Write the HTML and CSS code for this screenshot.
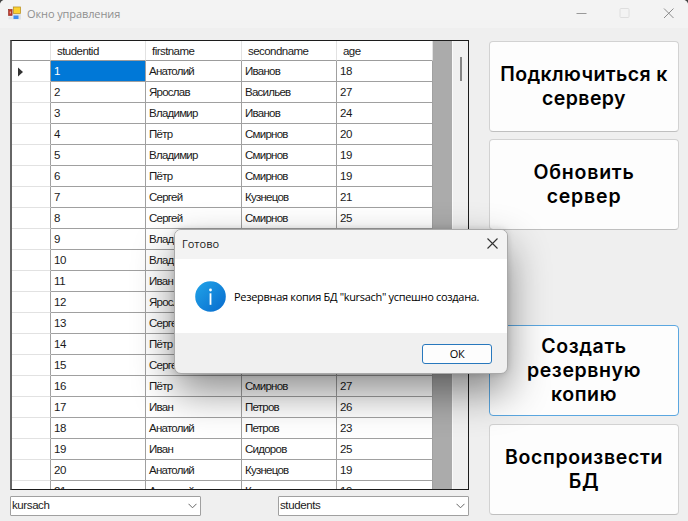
FILE: index.html
```
<!DOCTYPE html>
<html lang="ru">
<head>
<meta charset="utf-8">
<title>Окно управления</title>
<link rel="stylesheet" href="styles.css">
</head>
<body>
<div class="window">
  <header class="titlebar">
    <svg class="app-icon" width="14" height="14" viewBox="0 0 14 14">
      <rect x="4.500" y="0.500" width="8.500" height="13" fill="#dfe3e8"/>
      <rect x="0.500" y="3.500" width="3.600" height="6" fill="#c0392b" stroke="#8d2a20" stroke-width=".6"/>
      <rect x="1.800" y="5.500" width="1" height="2" fill="#f3c4bb"/>
      <rect x="5.500" y="1" width="7" height="6.500" fill="#fbd12f" stroke="#b98d1c" stroke-width=".7"/>
      <rect x="5.500" y="9.500" width="5" height="3.500" fill="#3f8df0"/>
      <rect x="0.500" y="10.800" width="4" height="2.500" fill="#dfe3e8"/>
    </svg>
    <h1 class="title">Окно управления</h1>
    <svg class="controls" width="100" height="12" viewBox="0 0 100 12" fill="none">
      <path d="M0.500 6.500H10.500" stroke="#999"/>
      <rect x="44" y="1.500" width="9" height="9" rx="1" stroke="#dedede"/>
      <path d="M88 1.500L97.500 11M97.500 1.500L88 11" stroke="#8c8c8c"/>
    </svg>
  </header>
  <main class="content">
    <section class="left">
      <div class="grid-box">
        <table class="grid">
          <colgroup><col class="c0"><col class="c1"><col class="c2"><col class="c1"><col class="c2"></colgroup>
          <thead><tr><th></th><th>studentid</th><th>firstname</th><th>secondname</th><th>age</th></tr></thead>
          <tbody>
            <tr><td><svg class="marker" width="5" height="10" viewBox="0 0 5 10"><path d="M0 0.500L5 5L0 9.500Z" fill="#333"/></svg></td><td class="selected">1</td><td>Анатолий</td><td>Иванов</td><td>18</td></tr>
            <tr><td></td><td>2</td><td>Ярослав</td><td>Васильев</td><td>27</td></tr>
            <tr><td></td><td>3</td><td>Владимир</td><td>Иванов</td><td>24</td></tr>
            <tr><td></td><td>4</td><td>Пётр</td><td>Смирнов</td><td>20</td></tr>
            <tr><td></td><td>5</td><td>Владимир</td><td>Смирнов</td><td>19</td></tr>
            <tr><td></td><td>6</td><td>Пётр</td><td>Смирнов</td><td>19</td></tr>
            <tr><td></td><td>7</td><td>Сергей</td><td>Кузнецов</td><td>21</td></tr>
            <tr><td></td><td>8</td><td>Сергей</td><td>Смирнов</td><td>25</td></tr>
            <tr><td></td><td>9</td><td>Владимир</td><td></td><td></td></tr>
            <tr><td></td><td>10</td><td>Владимир</td><td></td><td></td></tr>
            <tr><td></td><td>11</td><td>Иван</td><td></td><td></td></tr>
            <tr><td></td><td>12</td><td>Ярослав</td><td></td><td></td></tr>
            <tr><td></td><td>13</td><td>Сергей</td><td></td><td></td></tr>
            <tr><td></td><td>14</td><td>Пётр</td><td></td><td></td></tr>
            <tr><td></td><td>15</td><td>Сергей</td><td></td><td></td></tr>
            <tr><td></td><td>16</td><td>Пётр</td><td>Смирнов</td><td>27</td></tr>
            <tr><td></td><td>17</td><td>Иван</td><td>Петров</td><td>26</td></tr>
            <tr><td></td><td>18</td><td>Анатолий</td><td>Петров</td><td>23</td></tr>
            <tr><td></td><td>19</td><td>Иван</td><td>Сидоров</td><td>25</td></tr>
            <tr><td></td><td>20</td><td>Анатолий</td><td>Кузнецов</td><td>19</td></tr>
            <tr><td></td><td>21</td><td>Анатолий</td><td>Кузнецов</td><td>19</td></tr>
          </tbody>
        </table>
        <div class="scrollbar"><div class="thumb"></div></div>
      </div>
      <div class="combos">
        <div class="combo"><span>kursach</span><svg width="9" height="6" viewBox="0 0 9 6"><path d="M0.500 0.800L4.500 4.800L8.500 0.800" fill="none" stroke="#666"/></svg></div>
        <div class="combo"><span>students</span><svg width="9" height="6" viewBox="0 0 9 6"><path d="M0.500 0.800L4.500 4.800L8.500 0.800" fill="none" stroke="#666"/></svg></div>
      </div>
    </section>
    <aside class="actions">
      <button class="action">Подключиться к<br>серверу</button>
      <button class="action">Обновить<br>сервер</button>
      <button class="action focused">Создать<br>резервную<br>копию</button>
      <button class="action">Воспроизвести<br>БД</button>
    </aside>
  </main>
</div>
<div class="dialog">
  <div class="dialog-title"><span>Готово</span><svg width="11" height="11" viewBox="0 0 11 11"><path d="M0.500 0.500L10.500 10.500M10.500 0.500L0.500 10.500" fill="none" stroke="#333" stroke-width="1.100"/></svg></div>
  <div class="dialog-body">
    <svg class="info" width="31" height="31" viewBox="0 0 31 31">
      <defs><linearGradient id="blue" x1="0" y1="0" x2="1" y2="1"><stop offset=".1" stop-color="#1f9fe6"/><stop offset=".9" stop-color="#0a70d0"/></linearGradient></defs>
      <circle cx="15.500" cy="15.500" r="15.300" fill="url(#blue)"/>
      <circle cx="15.500" cy="9" r="1.400" fill="#fff"/>
      <rect x="14.600" y="12.300" width="1.800" height="11.500" fill="#fff"/>
    </svg>
    <span class="message">Резервная копия БД "kursach" успешно создана.</span>
  </div>
  <div class="dialog-footer"><button class="ok">ОК</button></div>
</div>
</body>
</html>
```
FILE: styles.css
```
* { box-sizing: border-box; }
html { background: #444; }
body {
  margin: 0;
  width: 688px;
  height: 521px;
  overflow: hidden;
  position: relative;
  font-family: "Liberation Sans", Arial, sans-serif;
  color: #1a1a1a;
}
.window {
  width: 688px;
  height: 521px;
  background: #efefef;
  border-radius: 5px 5px 0 0;
  overflow: hidden;
}
.titlebar {
  height: 28px;
  background: #f3f3f3;
  display: flex;
  align-items: center;
  padding: 0 12px 0 8px;
}
.app-icon { display: block; margin-top: -2px; }
.title {
  margin: 0 0 0 5px;
  font: 400 11px/14px "Open Sans", sans-serif;
  color: #8f8f8f;
  letter-spacing: -0.1px;
}
.controls { margin-left: auto; margin-top: -2px; }
.content {
  display: flex;
  justify-content: space-between;
  padding: 12px 9px 0 10px;
}
.left { width: 459px; }
.grid-box {
  height: 450px;
  border: 1px solid #1c1c1c;
  border-left: 2px solid #666;
  background: #ababab;
  overflow: hidden;
  display: flex;
  justify-content: space-between;
}
.grid {
  width: 421px;
  height: 460px;
  flex: none;
  table-layout: fixed;
  border-collapse: separate;
  border-spacing: 0;
  background: #fff;
  font-size: 11.5px;
  letter-spacing: -0.75px;
}
.c0 { width: 39px; }
.c1 { width: 95px; }
.c2 { width: 96px; }
.grid th {
  height: 20px;
  padding: 1px 0 0 6px;
  font-weight: 400;
  text-align: left;
  line-height: 14px;
  letter-spacing: -0.55px;
  border-right: 1px solid #e2e2e2;
  border-bottom: 1px solid #9c9c9c;
}
.grid td {
  height: 21px;
  padding: 0 0 0 3px;
  line-height: 14px;
  white-space: nowrap;
  border-right: 1px solid #a0a0a0;
  border-bottom: 1px solid #a0a0a0;
}
.grid td:nth-child(2), .grid td:nth-child(5) { letter-spacing: -0.3px; }
.grid td:first-child { border-bottom-color: #e2e2e2; padding: 1px 0 0 6px; }
.grid .selected { background: #0078d7; color: #fff; }
.marker { display: block; }
.scrollbar {
  width: 16px;
  background: #f0f0f0;
  border-left: 1px solid #fafafa;
  padding: 16px 0 0 7px;
}
.thumb { width: 2px; height: 24px; background: #858585; }
.combos { display: flex; justify-content: space-between; margin-top: 6px; }
.combo {
  width: 191px;
  height: 20px;
  background: #fff;
  border: 1px solid #a0a0a0;
  border-radius: 1px;
  display: flex;
  align-items: center;
  justify-content: space-between;
  padding: 0 3px 0 1px;
  font-size: 11.5px;
  letter-spacing: -0.4px;
}
.combo span { line-height: 14px; margin-top: -2px; }
.actions { width: 190px; display: flex; flex-direction: column; gap: 8px; padding-top: 1px; }
.action {
  height: 91px;
  flex: none;
  padding: 0 0 1px;
  margin: 0;
  background: #fdfdfd;
  border: 1px solid #d2d2d2;
  border-bottom-color: #bfbfbf;
  border-radius: 4px;
  color: #000;
  font: 600 19.5px/24px Inter, "Liberation Sans", sans-serif;
  letter-spacing: 0.4px;
  white-space: nowrap;
}
.action:nth-child(2) { margin-top: -1px; letter-spacing: 0.8px; }
.action.focused { margin-top: 87px; border-color: #5ba7e0; letter-spacing: 0.6px; }
.action:last-child { letter-spacing: 0.65px; }
.dialog {
  position: absolute;
  left: 174px;
  top: 229px;
  width: 334px;
  height: 145px;
  border: 1px solid #a9a9a9;
  border-radius: 7px;
  background: #f0f0f0;
  overflow: hidden;
  box-shadow: 0 18px 40px rgba(0,0,0,.45), 0 0 6px rgba(0,0,0,.14);
  font-family: "Open Sans", sans-serif;
  font-size: 11px;
}
.dialog-title {
  height: 29px;
  background: #f3f3f3;
  display: flex;
  align-items: center;
  justify-content: space-between;
  padding: 0 9px 2px 7px;
}
.dialog-body {
  height: 74px;
  background: #fff;
  display: flex;
  align-items: center;
  padding-left: 20px;
}
.info { display: block; }
.message { margin-left: 8px; white-space: nowrap; color: #000; letter-spacing: -0.31px; }
.dialog-footer { display: flex; justify-content: flex-end; padding: 11px 15px 0; }
.ok {
  width: 70px;
  height: 20px;
  padding: 0;
  background: #fdfdfd;
  border: 1px solid #2878bd;
  border-radius: 3px;
  color: #000;
  font: 400 11px/16px "Open Sans", sans-serif;
  letter-spacing: -0.3px;
}
```
